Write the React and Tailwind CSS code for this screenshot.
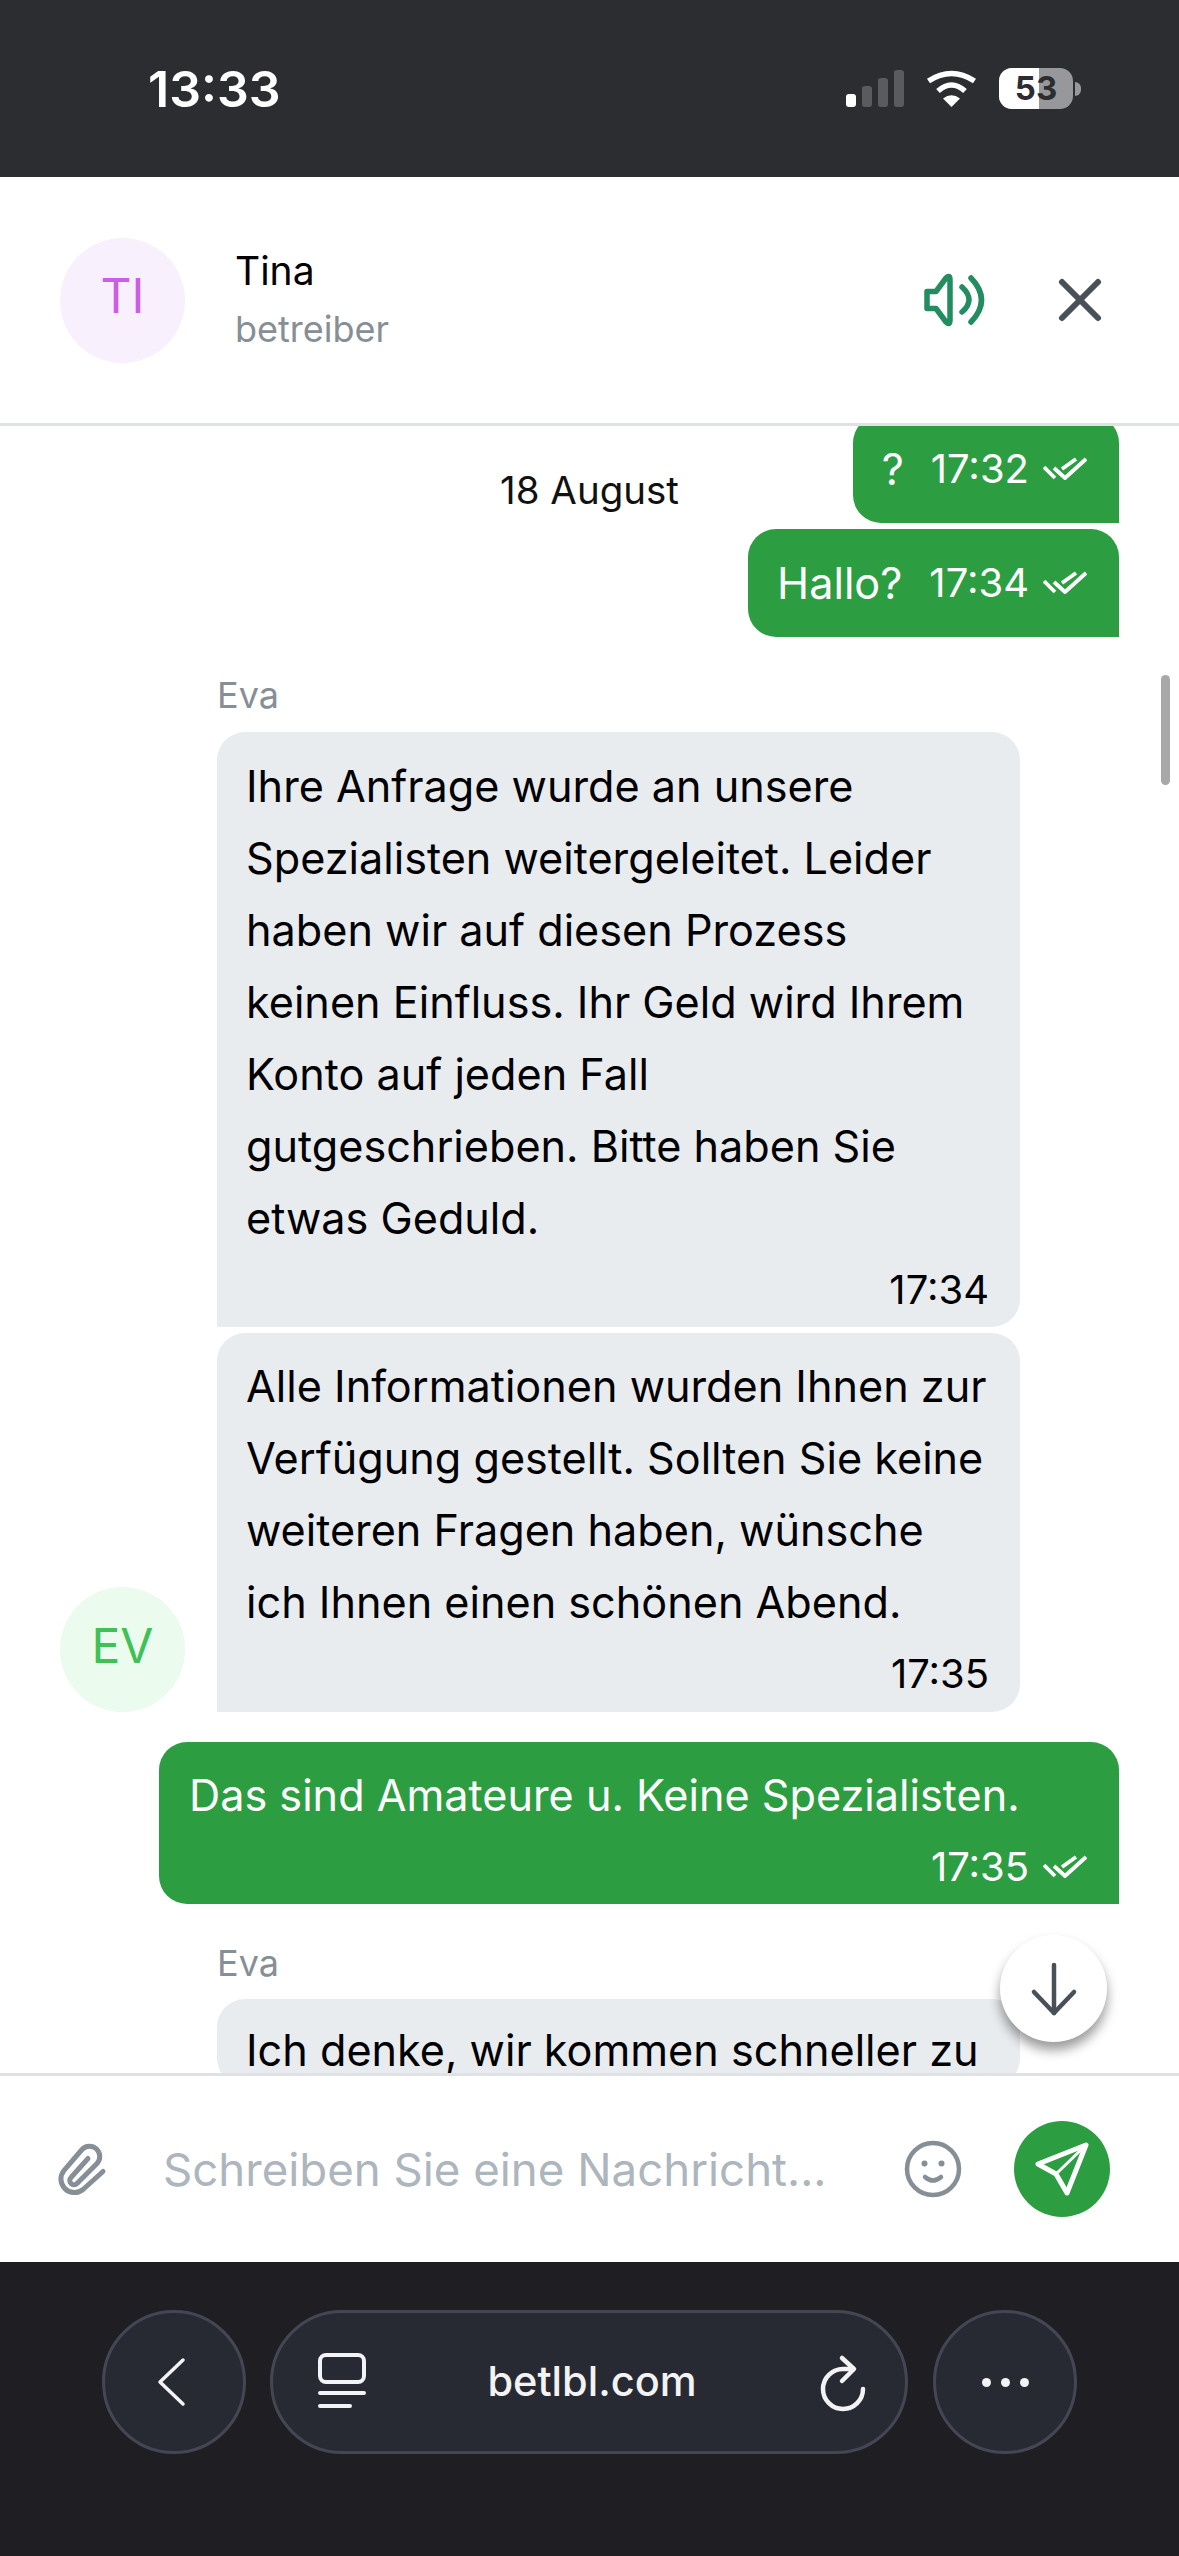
import { X } from "lucide-react";

// Double tick shown next to the time on sent messages.
function Ticks() {
  return (
    <svg width="44" height="24" viewBox="0 0 44 24" fill="none" stroke="#fff" strokeWidth="3.8" className="shrink-0">
      <path d="M1 10 L12 21" />
      <path d="M11 11 L22 21 L43 2" strokeLinejoin="round" />
      <path d="M19 12 L33 2" />
    </svg>
  );
}

function Avatar({ label, className }) {
  return (
    <div className={`flex h-[125px] w-[125px] shrink-0 items-center justify-center rounded-full pb-[8px] text-[48px] leading-none ${className}`}>
      {label}
    </div>
  );
}

function StatusBar() {
  return (
    <div className="flex h-[177px] shrink-0 items-center justify-between bg-[#2c2d31] pl-[148px] pr-[98px] text-white">
      <span className="text-[50px] font-semibold leading-none">13:33</span>
      <div className="flex items-center">
        <div className="flex h-[37px] items-end gap-[6px]">
          <span className="h-[13px] w-[10px] rounded-[3px] bg-white" />
          <span className="h-[21px] w-[10px] rounded-[3px] bg-[#5a5b5f]" />
          <span className="h-[29px] w-[10px] rounded-[3px] bg-[#5a5b5f]" />
          <span className="h-[37px] w-[10px] rounded-[3px] bg-[#5a5b5f]" />
        </div>
        <svg width="51" height="38" viewBox="0 0 51 38" fill="none" stroke="#fff" strokeWidth="5.5" className="ml-[22px]">
          <path d="M2.5 11 Q25.5 -4 48.5 11" />
          <path d="M12 21 Q25.5 9 39 21" />
          <path d="M25.5 37 L17 28.5 Q25.5 22 34 28.5 Z" fill="#fff" stroke="none" />
        </svg>
        <div className="relative ml-[22px] h-[41px] w-[74px] overflow-hidden rounded-[13px] bg-[#98989c]">
          <div className="h-full w-[40px] bg-white" />
          <span className="absolute inset-0 flex items-center justify-center text-[33px] font-bold leading-none text-[#2c2d31]">53</span>
        </div>
        <div className="ml-[2px] h-[14px] w-[6px] rounded-r-full bg-[#98989c]" />
      </div>
    </div>
  );
}

function Header() {
  return (
    <div className="flex h-[246px] shrink-0 items-center bg-white pl-[60px] pr-[63px]">
      <Avatar label="TI" className="bg-[#f8f0fc] text-[#cc5de8]" />
      <div className="ml-[50px] flex-1">
        <div className="text-[39px] leading-[48px] text-black">Tina</div>
        <div className="mt-[10px] text-[36px] leading-[48px] text-[#868e96]">betreiber</div>
      </div>
      <svg width="62" height="60" viewBox="24 20 62 60" fill="none" stroke="#238c60" strokeWidth="5.5" strokeLinecap="round" strokeLinejoin="round">
        <path d="M27 41.5 H36 L46 28 Q50 24 50 30 V70 Q50 76 46 72 L36 58.5 H27 Z" />
        <path d="M62 37 Q76 50 62 62" />
        <path d="M71 28 Q92 50 71 72" />
      </svg>
      <X size={72} color="#495057" strokeWidth={2} className="ml-[58px]" />
    </div>
  );
}

function SentBubble({ text, time }) {
  return (
    <div className="flex h-[108px] items-center self-end rounded-[28px] rounded-br-none bg-[#2c9e41] pl-[29px] pr-[32px] text-white">
      <span className="text-[43.2px] leading-[72px]">{text}</span>
      <span className="ml-[27px] text-[40px] leading-[48px]">{time}</span>
      <span className="ml-[14px]"><Ticks /></span>
    </div>
  );
}

function ReceivedBubble({ lines, time, className = "" }) {
  return (
    <div className={`w-[803px] rounded-[28px] bg-[#e9ecef] pl-[29px] pr-[31px] text-black ${className}`}>
      {lines.map((line) => (
        <div key={line} className="whitespace-nowrap text-[43.2px] leading-[72px]">{line}</div>
      ))}
      {time && <div className="mt-3 pb-[13px] text-right text-[40px] leading-[48px]">{time}</div>}
    </div>
  );
}

function Messages() {
  return (
    <div className="relative min-h-0 flex-1 overflow-hidden bg-white">
      <div className="-mt-[11px] flex flex-col px-[60px]">
        <SentBubble text="?" time="17:32" />
        <div className="mt-[6px] self-end">
          <SentBubble text="Hallo?" time="17:34" />
        </div>

        <div className="mt-[33px] flex items-end gap-[32px]">
          <Avatar label="EV" className="bg-[#ebfbee] text-[#40c057]" />
          <div className="flex flex-col gap-[6px]">
            <div className="mb-[6px] text-[36px] leading-[50px] text-[#868e96]">Eva</div>
            <ReceivedBubble
              className="rounded-bl-none pt-[18px]"
              time="17:34"
              lines={[
                "Ihre Anfrage wurde an unsere",
                "Spezialisten weitergeleitet. Leider",
                "haben wir auf diesen Prozess",
                "keinen Einfluss. Ihr Geld wird Ihrem",
                "Konto auf jeden Fall",
                "gutgeschrieben. Bitte haben Sie",
                "etwas Geduld.",
              ]}
            />
            <ReceivedBubble
              className="rounded-bl-none pt-[17px] pb-px"
              time="17:35"
              lines={[
                "Alle Informationen wurden Ihnen zur",
                "Verfügung gestellt. Sollten Sie keine",
                "weiteren Fragen haben, wünsche",
                "ich Ihnen einen schönen Abend.",
              ]}
            />
          </div>
        </div>

        <div className="mt-[30px] w-[960px] self-end rounded-[28px] rounded-br-none bg-[#2c9e41] pl-[30px] pr-[32px] pt-[17px] pb-[13px] text-white">
          <div className="whitespace-nowrap text-[43.2px] leading-[72px]">Das sind Amateure u. Keine Spezialisten.</div>
          <div className="mt-3 flex items-center justify-end gap-[14px] text-[40px] leading-[48px]">
            17:35
            <Ticks />
          </div>
        </div>

        <div className="ml-[157px] mt-[34px]">
          <div className="mb-[11px] text-[36px] leading-[50px] text-[#868e96]">Eva</div>
          <ReceivedBubble className="pt-[15px]" lines={["Ich denke, wir kommen schneller zu"]} />
        </div>
      </div>

      {/* sticky date label, scroll thumb and jump-to-latest button float over the list */}
      <div className="absolute left-0 right-0 top-[40px] text-center text-[38.5px] leading-[48px] text-[#111]">18 August</div>
      <div className="absolute left-[1161px] top-[249px] h-[110px] w-[9px] rounded-full bg-[#a8a8a8]" />
      <button className="absolute left-[1000px] top-[1509px] flex h-[107px] w-[107px] items-center justify-center rounded-full bg-white shadow-[0_8px_12px_rgba(0,0,0,0.4)]">
        <svg width="50" height="56" viewBox="-25 -28 50 56" fill="none" stroke="#495057" strokeWidth="4.5" strokeLinecap="round" strokeLinejoin="round">
          <path d="M0 -24 V24" />
          <path d="M-20 3 L0 24 L20 3" />
        </svg>
      </button>
    </div>
  );
}

function Composer() {
  return (
    <div className="flex h-[186px] shrink-0 items-center bg-white pl-[55px] pr-[69px]">
      <svg width="55" height="55" viewBox="15 31.5 55 55" fill="none" stroke="#868e96" strokeWidth="5" strokeLinecap="round" strokeLinejoin="round">
        <path d="M63 61 L43 79 A13.5 13.5 0 0 1 24 60 L42 39 A9.5 9.5 0 0 1 57 53 L37 73 A4 4 0 0 1 31 67 L48 48" />
      </svg>
      <div className="ml-[53px] mt-[2px] flex-1 whitespace-nowrap text-[45.6px] leading-none text-[#adb5bd]">Schreiben Sie eine Nachricht...</div>
      <svg width="60" height="60" viewBox="-30 -30 60 60" fill="none" stroke="#868e96" strokeWidth="4.5" strokeLinecap="round">
        <circle r="26" />
        <circle cx="-8.5" cy="-5.5" r="3" fill="#868e96" stroke="none" />
        <circle cx="8.5" cy="-5.5" r="3" fill="#868e96" stroke="none" />
        <path d="M-8 8 Q0 15 8 8" />
      </svg>
      <button className="ml-[51px] flex h-[96px] w-[96px] items-center justify-center rounded-full bg-[#2c9e41]">
        <svg width="60" height="60" viewBox="-30 -30 60 60" fill="none" stroke="#fff" strokeWidth="5" strokeLinecap="round" strokeLinejoin="round">
          <path d="M24 -24 L-24 -5 L-6 5 L5 24 Z" />
          <path d="M24 -24 L-6 5" strokeWidth="3" />
        </svg>
      </button>
    </div>
  );
}

function BrowserBar() {
  const shell = "h-[144px] shrink-0 border-[3px] border-[#454654] bg-[#282a33] rounded-full";
  return (
    <div className="h-[294px] shrink-0 bg-[#1e1e23] pl-[102px] pt-[48px] text-[#f3f3f5]">
      <div className="flex items-center">
        <button className={`${shell} flex w-[144px] items-center justify-center`}>
          <svg width="30" height="50" viewBox="0 0 30 50" fill="none" stroke="#f3f3f5" strokeWidth="3.5" strokeLinecap="round" strokeLinejoin="round" className="mr-[5px]">
            <path d="M26 3 L3 25 L26 47" />
          </svg>
        </button>
        <div className={`${shell} ml-[24px] flex w-[638px] items-center justify-between pl-[44px] pr-[36px]`}>
          <svg width="50" height="60" viewBox="0 0 50 60" fill="none" stroke="#f3f3f5" strokeWidth="4" strokeLinecap="round">
            <rect x="3" y="3" width="44" height="27" rx="6" />
            <path d="M3 41 H47" />
            <path d="M3 54 H33" />
          </svg>
          <span className="text-[41.5px] font-medium leading-none">betlbl.com</span>
          <svg width="52" height="60" viewBox="0 0 52 60" fill="none" stroke="#f3f3f5" strokeWidth="4.5" strokeLinecap="round" strokeLinejoin="round">
            <path d="M46 37 A20 20 0 1 1 26 17 H36" />
            <path d="M25 6 L37 17 L25 29" />
          </svg>
        </div>
        <button className={`${shell} ml-[25px] flex w-[144px] items-center justify-center gap-[10px]`}>
          <span className="h-[9px] w-[9px] rounded-full bg-[#f3f3f5]" />
          <span className="h-[9px] w-[9px] rounded-full bg-[#f3f3f5]" />
          <span className="h-[9px] w-[9px] rounded-full bg-[#f3f3f5]" />
        </button>
      </div>
    </div>
  );
}

export default function App() {
  return (
    <div className="flex h-[2556px] w-[1179px] flex-col overflow-hidden font-['Inter',sans-serif]">
      <StatusBar />
      <Header />
      <div className="h-[3px] shrink-0 bg-[#dee2e6]" />
      <Messages />
      <div className="h-[3px] shrink-0 bg-[#dee2e6]" />
      <Composer />
      <BrowserBar />
    </div>
  );
}
